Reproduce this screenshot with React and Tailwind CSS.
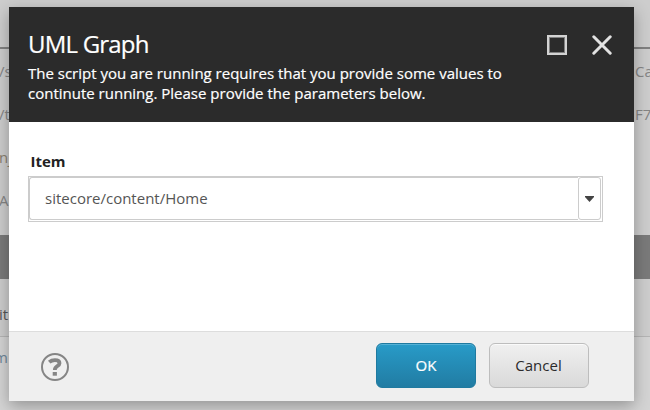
const rows = [
  { left: '/s', right: 'Ca', tone: 'text-[#858585]' },
  { left: '/t', right: 'F7', tone: 'text-[#858585]' },
  { left: 'nj', right: '', tone: 'text-[#8a8070]' },
  { left: 'A', right: '', tone: 'text-[#858585]' },
];

function BackgroundRow({ left, right, tone }) {
  return (
    <div className={`flex h-[43px] items-center justify-between text-[15px] ${tone}`}>
      <span className="-ml-px w-[9px] whitespace-nowrap">{left}</span>
      <span className="w-[15px] whitespace-nowrap">{right}</span>
    </div>
  );
}

function Page() {
  return (
    <div className="flex h-full flex-col bg-[#cdcdcd]">
      <div className="h-[49px] shrink-0 border-b-2 border-[#808080]" />
      <div className="h-[186px] shrink-0 pt-px">
        {rows.map((row) => (
          <BackgroundRow key={row.left} {...row} />
        ))}
      </div>
      <div className="h-11 shrink-0 bg-[#7a7a7a]" />
      <div className="h-[58px] shrink-0 border-b border-[#b5b5b5] pt-[14px]">
        <BackgroundRow left="it" right="" tone="text-[#555555]" />
      </div>
      <div className="grow bg-[#d4d4d4]">
        <div className="flex h-[41px] w-2 items-center justify-end text-[15px] text-[#6f8798]">m</div>
      </div>
    </div>
  );
}

function Header() {
  return (
    <header className="flex h-[115px] shrink-0 justify-between bg-[#2b2b2b] pl-[19px] text-white">
      <div className="pt-[19px]">
        <h1 className="text-[24px] leading-[35px] tracking-[-0.8px] [-webkit-text-stroke:0.2px_white]">UML Graph</h1>
        <p className="mt-[2px] whitespace-nowrap text-[15px] leading-5 font-medium [-webkit-text-stroke:0.2px_white]">
          The script you are running requires that you provide some values to
          <br />
          continute running. Please provide the parameters below.
        </p>
      </div>
      <div className="flex gap-[25px] pt-7 pr-[22px]">
        <div className="size-5 border-2 border-[#d3d3d3]">
          <div className="size-4 border border-[#808080]" />
        </div>
        <svg className="size-5" viewBox="0 0 20 20" fill="none" stroke="#e2e2e2" strokeWidth="3" strokeLinecap="round">
          <path d="M1.8 1.8 18.2 18.2M18.2 1.8 1.8 18.2" />
        </svg>
      </div>
    </header>
  );
}

function Combo() {
  return (
    <div className="flex h-[46px] w-[575px] border border-[#cccccc] bg-white p-px pt-0 pl-0">
      <div className="flex grow items-center rounded-l-[3px] border border-r-0 border-[#cccccc] pl-[15px] text-[15px] text-[#555555]">
        sitecore/content/Home
      </div>
      <div className="flex w-[23px] items-center justify-center rounded-[3px] border border-[#cccccc]">
        <svg className="mt-px h-[6px] w-[9px]" viewBox="0 0 9 6" fill="#444444">
          <path d="M0 0H9V1L4.5 6 0 1Z" />
        </svg>
      </div>
    </div>
  );
}

function Footer() {
  return (
    <footer className="flex h-[70px] shrink-0 items-start gap-[13px] border-t border-[#dddddd] bg-[#efefef] pt-[11px] pr-[45px] pl-8">
      <svg className="mt-[10px] mr-auto size-7" viewBox="0 0 28 28" fill="none" stroke="#858585">
        <circle cx="14" cy="14" r="13" strokeWidth="2" />
        <path d="M8.2 9.1C9.6 7.9 11.5 7.1 13.9 7.1c2.9 0 4.6 1.1 4.6 3.1 0 3-4.7 2.8-4.7 6.9" strokeWidth="3.8" />
        <path d="M13.8 19V22.7" strokeWidth="4.2" />
      </svg>
      <button className="h-[45px] w-[100px] rounded-md border border-[#1f7aa0] bg-gradient-to-b from-[#289bc8] to-[#217ca3] text-[15px] font-medium text-white shadow-[inset_0_1px_0_#55b1d5] [-webkit-text-stroke:0.2px_white]">
        OK
      </button>
      <button className="h-[45px] w-[100px] rounded-md border border-[#bdbdbd] bg-gradient-to-b from-[#f0f0f0] to-[#d9d9d9] pr-px text-[15px] text-[#2b2b2b] shadow-[inset_0_1px_0_#fafafa]">
        Cancel
      </button>
    </footer>
  );
}

export default function App() {
  return (
    <div className="relative h-[410px] w-[650px] overflow-hidden font-['Open_Sans',sans-serif]">
      <Page />
      <div className="absolute top-[7px] left-[9px] flex h-[394px] w-[625px] flex-col bg-white shadow-[0_5px_15px_rgba(0,0,0,0.3)]">
        <Header />
        <main className="grow pt-[29px] pl-[19px]">
          <label className="mb-[5px] block pl-[2.5px] text-[15px] leading-5 font-bold text-[#222222]">Item</label>
          <Combo />
        </main>
        <Footer />
      </div>
    </div>
  );
}
